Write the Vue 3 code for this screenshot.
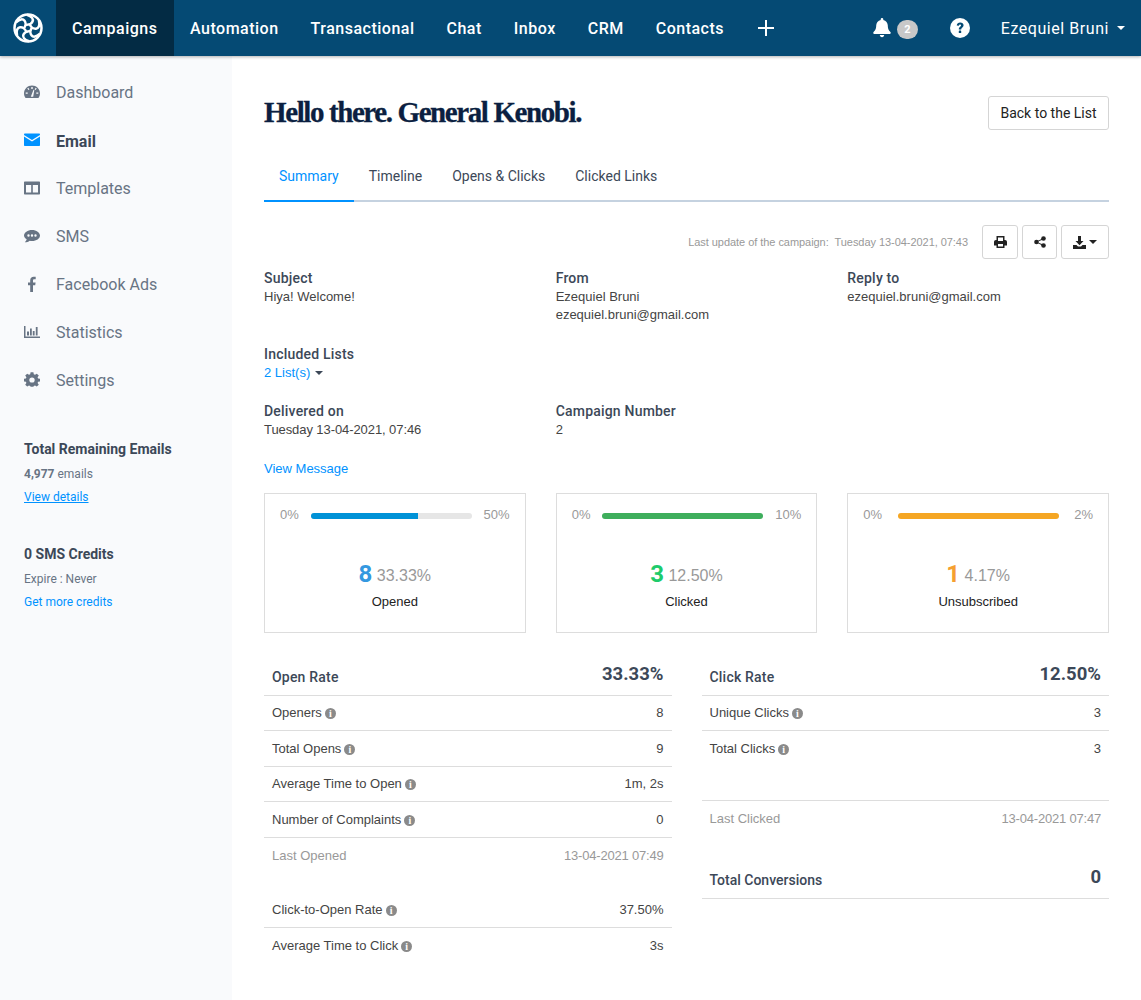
<template>
  <div class="page">
    <header class="topbar">
      <div class="logo">
        <svg width="32" height="32" viewBox="0 0 32 32" fill="none" stroke="#fff" stroke-width="2.500">
          <circle cx="16" cy="16" r="13.500" />
          <path v-for="angle in logoArms" :key="angle" :transform="`rotate(${angle} 16 16)`" d="M13 12.500C20 14 25.500 6 15 2.800" />
        </svg>
      </div>
      <nav class="mainnav">
        <a v-for="item in navItems" :key="item" class="navlink" :class="{ active: item === 'Campaigns' }">{{ item }}</a>
        <a class="navlink plus">
          <svg width="16" height="16" viewBox="0 0 16 16" fill="none" stroke="#fff" stroke-width="2"><path d="M8 0V16M0 8H16" /></svg>
        </a>
      </nav>
      <div class="topright">
        <svg class="bell" width="18" height="20" viewBox="0 0 18 20" fill="#fff">
          <path d="M9 0C8.200 0 7.700.6 7.700 1.300V2C5 2.600 3.200 4.900 3.200 7.600C3.200 11.600 1.800 12.900.6 14.100C.1 14.600 0 15.900 1 15.900H17C18 15.900 17.900 14.600 17.400 14.100C16.200 12.900 14.800 11.600 14.800 7.600C14.800 4.900 13 2.600 10.300 2V1.300C10.300.6 9.800 0 9 0Z" />
          <path d="M6.800 17H11.200C11.200 18.200 10.200 19.200 9 19.200C7.800 19.200 6.800 18.200 6.800 17Z" />
        </svg>
        <span class="bubble">2</span>
        <svg class="help" width="20" height="20" viewBox="0 0 20 20">
          <circle cx="10" cy="10" r="10" fill="#fff" />
          <path d="M6.700 7.400C6.900 5.500 8.300 4.400 10.200 4.400C12.100 4.400 13.600 5.600 13.600 7.300C13.600 9.600 11.200 9.700 11.200 11.400H8.800C8.800 8.600 11 8.700 11 7.400C11 6.900 10.600 6.500 10 6.500C9.400 6.500 9 6.900 8.900 7.700Z" fill="#054a74" />
          <rect x="8.800" y="12.500" width="2.400" height="2.600" rx=".4" fill="#054a74" />
        </svg>
        <span class="username">Ezequiel Bruni</span>
        <span class="caret user-caret"></span>
      </div>
    </header>

    <div class="body">
      <aside class="sidebar">
        <a v-for="link in sideLinks" :key="link.label" class="sidelink" :class="{ current: link.current }">
          <svg class="sideicon" width="16" height="16" viewBox="0 0 16 16" :fill="link.current ? '#0092ff' : '#687484'" v-html="link.icon"></svg>
          <span>{{ link.label }}</span>
        </a>
        <div class="quota first-quota">
          <strong>Total Remaining Emails</strong>
          <p><b>4,977</b> emails</p>
          <a class="underlined">View details</a>
        </div>
        <div class="quota">
          <strong>0 SMS Credits</strong>
          <p>Expire : Never</p>
          <a>Get more credits</a>
        </div>
      </aside>

      <main class="content">
        <div class="titlerow">
          <h1>Hello there. General Kenobi.</h1>
          <button class="btn back">Back to the List</button>
        </div>

        <div class="tabs">
          <a v-for="tab in tabs" :key="tab" class="tab" :class="{ active: tab === 'Summary' }">{{ tab }}</a>
        </div>

        <div class="updaterow">
          <span class="updated">Last update of the campaign:&nbsp; Tuesday 13-04-2021, 07:43</span>
          <button class="btn icon-btn print">
            <svg width="13" height="12" viewBox="0 0 13 12" fill="#222">
              <path fill-rule="evenodd" d="M2.500 0H10.500V4H11C12.200 4 13 4.800 13 6V9.500H10.500V12H2.500V9.500H0V6C0 4.800 .8 4 2 4H2.500ZM4 1.400V5H9V1.400ZM4 8V10.600H9V8Z" />
            </svg>
          </button>
          <button class="btn icon-btn share">
            <svg width="12" height="12" viewBox="0 0 12 12" fill="#222">
              <circle cx="2.500" cy="6" r="2.300" /><circle cx="9.500" cy="2.500" r="2.300" /><circle cx="9.500" cy="9.500" r="2.300" />
              <path d="M2.500 5.400L9.500 2V3.200L3 6L9.500 8.800V10L2.500 6.600Z" />
            </svg>
          </button>
          <button class="btn icon-btn download">
            <svg width="13" height="13" viewBox="0 0 13 13" fill="#222">
              <path d="M5 0H8V5H10.500L6.500 9.200L2.500 5H5ZM0 9H3.500L5 10.500H8L9.500 9H13V13H0Z" />
            </svg>
            <span class="caret dark"></span>
          </button>
        </div>

        <div class="facts">
          <div class="fact">
            <h4>Subject</h4>
            <p>Hiya! Welcome!</p>
          </div>
          <div class="fact">
            <h4>From</h4>
            <p>Ezequiel Bruni</p>
            <p>ezequiel.bruni@gmail.com</p>
          </div>
          <div class="fact">
            <h4>Reply to</h4>
            <p>ezequiel.bruni@gmail.com</p>
          </div>
          <div class="fact lists">
            <h4>Included Lists</h4>
            <p><a>2 List(s)</a> <span class="caret dark small"></span></p>
          </div>
          <div class="fact">
            <h4>Delivered on</h4>
            <p class="date">Tuesday 13-04-2021, 07:46</p>
          </div>
          <div class="fact">
            <h4>Campaign Number</h4>
            <p>2</p>
          </div>
        </div>

        <a class="viewmsg">View Message</a>

        <div class="cards">
          <div v-for="card in cards" :key="card.label" class="card">
            <div class="gauge">
              <span>0%</span>
              <div class="track"><div class="fill" :style="{ width: card.bar + '%', background: card.barColor }"></div></div>
              <span>{{ card.max }}</span>
            </div>
            <div class="count"><b :style="{ color: card.color }">{{ card.value }}</b> {{ card.percent }}</div>
            <div class="cardlabel">{{ card.label }}</div>
          </div>
        </div>

        <div class="tables">
          <div class="column">
            <div class="row head"><span>Open Rate</span><b>33.33%</b></div>
            <div v-for="row in openRows" :key="row.label" class="row" :class="{ muted: row.muted, plain: row.muted }">
              <span>{{ row.label }}<i v-if="!row.muted" class="info">i</i></span>
              <span>{{ row.value }}</span>
            </div>
            <div class="spacer"></div>
            <div class="row"><span>Click-to-Open Rate<i class="info">i</i></span><span>37.50%</span></div>
            <div class="row plain"><span>Average Time to Click<i class="info">i</i></span><span>3s</span></div>
          </div>
          <div class="column">
            <div class="row head"><span>Click Rate</span><b>12.50%</b></div>
            <div class="row"><span>Unique Clicks<i class="info">i</i></span><span>3</span></div>
            <div class="row plain gap-below"><span>Total Clicks<i class="info">i</i></span><span>3</span></div>
            <div class="row muted plain topline"><span>Last Clicked</span><span>13-04-2021 07:47</span></div>
            <div class="row head conversions"><span>Total Conversions</span><b>0</b></div>
          </div>
        </div>
      </main>
    </div>
  </div>
</template>

<script setup>
const navItems = ['Campaigns', 'Automation', 'Transactional', 'Chat', 'Inbox', 'CRM', 'Contacts']
const tabs = ['Summary', 'Timeline', 'Opens & Clicks', 'Clicked Links']
const logoArms = [0, 60, 120, 180, 240, 300]

const sideLinks = [
  { label: 'Dashboard', icon: '<path fill-rule="evenodd" d="M8 1.500C3.600 1.500 0 5 0 9.300C0 11 .5 12.500 1.400 13.800C1.500 14 1.700 14.100 1.900 14.100H14.100C14.300 14.100 14.500 14 14.600 13.800C15.500 12.500 16 11 16 9.300C16 5 12.400 1.500 8 1.500ZM7.300 3H8.700V5H7.300ZM3.300 4.600L4.300 3.800L5.400 5.400L4.400 6.100ZM12.700 4.600L11.700 3.800L10.600 5.400L11.600 6.100ZM1.700 8.500H3.700V9.800H1.700ZM12.300 8.500H14.300V9.800H12.300ZM6.800 12.700L9.500 5.800L10.300 6.100L9.200 12.700Z" />' },
  { label: 'Email', current: true, icon: '<path d="M0 2.500C0 2 .4 1.500 1 1.500H15C15.600 1.500 16 2 16 2.500V3L8 8L0 3ZM0 4.500L8 9.500L16 4.500V13C16 13.600 15.600 14 15 14H1C.4 14 0 13.600 0 13Z" />' },
  { label: 'Templates', icon: '<path fill-rule="evenodd" d="M1 1.500H15C15.600 1.500 16 1.900 16 2.500V13.500C16 14.100 15.600 14.500 15 14.500H1C.4 14.500 0 14.100 0 13.500V2.500C0 1.900 .4 1.500 1 1.500ZM2 5V12.500H7.200V5ZM8.800 5V12.500H14V5Z" />' },
  { label: 'SMS', icon: '<path fill-rule="evenodd" d="M8 2C12.400 2 16 4.500 16 7.500C16 10.500 12.400 13 8 13C7.200 13 6.400 12.900 5.700 12.700C4.500 13.700 2.800 14.300 .8 14.300C1.800 13.400 2.500 12.400 2.700 11.300C1 10.300 0 9 0 7.500C0 4.500 3.600 2 8 2ZM4.500 6.300A1.200 1.200 0 1 0 4.500 8.700A1.200 1.200 0 1 0 4.500 6.300ZM8 6.300A1.200 1.200 0 1 0 8 8.700A1.200 1.200 0 1 0 8 6.300ZM11.500 6.300A1.200 1.200 0 1 0 11.500 8.700A1.200 1.200 0 1 0 11.500 6.300Z" />' },
  { label: 'Facebook Ads', icon: '<path d="M6.200 16V9.200H4V6.400H6.200V4.400C6.200 2 7.600.7 9.700.7C10.700.7 11.400.8 11.700.8V3.300H10.300C9.200 3.300 9 3.900 9 4.700V6.400H11.600L11.200 9.200H9V16Z" />' },
  { label: 'Statistics', icon: '<path d="M0 2H1.500V12.500H16V14H0ZM3 7.500H5V11.500H3ZM6 4.500H7.800V11.500H6ZM8.800 7H10.600V11.500H8.800ZM11.800 3H13.600V11.500H11.800Z" />' },
  { label: 'Settings', icon: '<path fill-rule="evenodd" d="M6.600.8H9.400L9.800 2.900L11 3.400L12.800 2.200L14.800 4.200L13.600 6L14.100 7.200L16 7.600V10.400L14.100 10.800L13.600 12L14.800 13.800L12.800 15.800L11 14.600L9.800 15.100L9.400 16H6.600L6.200 15.100L5 14.600L3.200 15.800L1.200 13.800L2.400 12L1.900 10.800L0 10.400V7.600L1.900 7.200L2.400 6L1.200 4.200L3.200 2.200L5 3.400L6.200 2.900ZM8 6.100A2.700 2.700 0 1 0 8 11.500A2.700 2.700 0 1 0 8 6.100Z" transform="translate(0 -.4) scale(1 .95)" />' }
]

const cards = [
  { value: 8, percent: '33.33%', label: 'Opened', max: '50%', bar: 66.5, barColor: '#0092d7', color: '#3498e0' },
  { value: 3, percent: '12.50%', label: 'Clicked', max: '10%', bar: 100, barColor: '#3eae5c', color: '#1ecb6b' },
  { value: 1, percent: '4.17%', label: 'Unsubscribed', max: '2%', bar: 100, barColor: '#f5a623', color: '#f5a030' }
]

const openRows = [
  { label: 'Openers', value: '8' },
  { label: 'Total Opens', value: '9' },
  { label: 'Average Time to Open', value: '1m, 2s' },
  { label: 'Number of Complaints', value: '0' },
  { label: 'Last Opened', value: '13-04-2021 07:49', muted: true }
]
</script>

<style>
html, body {
  margin: 0;
  background: #fff;
}
</style>

<style scoped>
.page {
  width: 1141px;
  height: 1000px;
  overflow: hidden;
  font-family: Roboto, sans-serif;
  font-size: 14px;
  color: #333;
}

.topbar {
  position: relative;
  z-index: 2;
  height: 56px;
  display: flex;
  align-items: center;
  background: #054a74;
  color: #fff;
  box-shadow: 0 1px 3px rgba(0, 0, 0, 0.3);
}

.logo {
  width: 56px;
  height: 56px;
  display: flex;
  align-items: center;
  justify-content: center;
}

.mainnav {
  display: flex;
  height: 100%;
}

.navlink {
  display: flex;
  align-items: center;
  padding: 0 16px;
  font-size: 16px;
  font-weight: 500;
  letter-spacing: 0.5px;
}

.navlink.active {
  background: #032b44;
  width: 118px;
  box-sizing: border-box;
}

.navlink.plus {
  padding: 0 0 0 18px;
}

.topright {
  margin-left: auto;
  display: flex;
  align-items: center;
  padding-right: 16px;
}

.bubble {
  width: 21px;
  height: 19px;
  margin: 2px 0 0 6px;
  border-radius: 10px;
  background: #c8c8c8;
  color: #fff;
  font-size: 11px;
  font-weight: 700;
  line-height: 19px;
  text-align: center;
}

.help {
  margin-left: 32px;
}

.username {
  margin-left: 31px;
  font-size: 16px;
  letter-spacing: 0.55px;
}

.caret {
  display: inline-block;
  width: 0;
  height: 0;
  border-left: 4px solid transparent;
  border-right: 4px solid transparent;
  border-top: 4px solid #fff;
}

.user-caret {
  margin-left: 8px;
}

.caret.dark {
  border-top-color: #222;
}

.caret.small {
  vertical-align: 2px;
  margin-left: 1px;
  border-top-color: #3c4858;
}

.body {
  display: flex;
  height: 944px;
}

.sidebar {
  width: 232px;
  flex: none;
  box-sizing: border-box;
  padding: 12px 0 0 24px;
  background: #f9fafc;
}

.sidelink {
  height: 48px;
  display: flex;
  align-items: center;
  color: #687484;
  font-size: 16px;
}

.sidelink.current {
  color: #3c4858;
  font-weight: 700;
}

.sidelink.current span {
  padding-top: 2px;
}

.sideicon {
  width: 16px;
  margin-right: 16px;
}

.quota {
  margin-bottom: 39px;
  font-size: 12px;
  color: #687484;
}

.first-quota {
  margin-top: 35px;
}

.quota strong {
  display: block;
  color: #3c4858;
  font-size: 14px;
  font-weight: 700;
  line-height: 20px;
}

.quota p {
  margin: 7px 0;
  line-height: 16px;
}

.quota a {
  display: block;
  color: #0092ff;
  line-height: 16px;
}

.quota a.underlined {
  text-decoration: underline;
}

.content {
  flex: 1;
  min-width: 0;
  padding: 0 32px;
}

.titlerow {
  display: flex;
  align-items: center;
  justify-content: space-between;
  height: 34px;
  margin-top: 40px;
}

h1 {
  margin: 0;
  padding-bottom: 2px;
  color: #0b1f41;
  font-family: "Liberation Serif", serif;
  font-size: 29px;
  font-weight: 700;
  letter-spacing: -1.4px;
  -webkit-text-stroke: 0.3px #0b1f41;
}

.btn {
  box-sizing: border-box;
  height: 34px;
  border: 1px solid #d5d5d5;
  border-radius: 3px;
  background: #fff;
  color: #222;
  font-family: Roboto, sans-serif;
  font-size: 14px;
  padding: 0 11px;
}

.back {
  width: 121px;
  padding: 0;
}

.tabs {
  display: flex;
  margin-top: 20px;
  height: 52px;
  box-sizing: border-box;
  border-bottom: 2px solid #c5d2e0;
}

.tab {
  padding: 0 15px;
  line-height: 52px;
  height: 50px;
  color: #3c4858;
  font-size: 14px;
}

.tab.active {
  color: #0092ff;
  border-bottom: 2px solid #0092ff;
  box-sizing: border-box;
  height: 52px;
}

.updaterow {
  display: flex;
  align-items: center;
  justify-content: flex-end;
  gap: 4px;
  margin-top: 23px;
}

.updated {
  margin-right: 10px;
  color: #999;
  font-family: "Liberation Sans", sans-serif;
  font-size: 11px;
  letter-spacing: -0.05px;
}

.icon-btn {
  display: flex;
  align-items: center;
  justify-content: center;
  padding: 0;
}

.print { width: 36px; }
.share { width: 35px; }
.download { width: 48px; gap: 3px; }

.facts {
  display: grid;
  grid-template-columns: repeat(3, 1fr);
  column-gap: 30px;
  margin-top: 10px;
  line-height: 18px;
  font-family: "Liberation Sans", sans-serif;
  font-size: 13px;
}

.fact h4 {
  margin: 0;
  color: #3c4858;
  font-family: Roboto, sans-serif;
  font-size: 14px;
  font-weight: 500;
  line-height: 19px;
  letter-spacing: 0.2px;
}

.fact p {
  margin: 0;
  color: #444;
}

.fact p.date {
  letter-spacing: -0.08px;
}

.fact.lists {
  grid-column: 1 / 4;
  padding: 21px 0 20px;
}

.fact.lists a {
  color: #0092ff;
}

.viewmsg {
  display: block;
  margin-top: 21px;
  color: #0092ff;
  font-family: "Liberation Sans", sans-serif;
  font-size: 13px;
  line-height: 18px;
}

.cards {
  display: grid;
  grid-template-columns: repeat(3, 1fr);
  column-gap: 30px;
  margin-top: 15px;
}

.card {
  box-sizing: border-box;
  height: 140px;
  border: 1px solid #ddd;
  text-align: center;
}

.gauge {
  display: flex;
  align-items: center;
  justify-content: space-between;
  padding: 13px 15px 0;
  color: #999;
  font-family: "Liberation Sans", sans-serif;
  font-size: 13px;
  line-height: 15px;
}

.track {
  flex: none;
  width: 161px;
  height: 6px;
  margin-top: 2px;
  border-radius: 3px;
  overflow: hidden;
  background: #e6e6e6;
}

.fill {
  height: 100%;
}

.count {
  margin-top: 38px;
  color: #999;
  font-family: "Liberation Sans", sans-serif;
  font-size: 16px;
  line-height: 28px;
}

.count b {
  font-family: Roboto, sans-serif;
  font-size: 24px;
  vertical-align: -1px;
}

.cardlabel {
  margin-top: 3px;
  color: #222;
  font-family: "Liberation Sans", sans-serif;
  font-size: 13px;
  line-height: 18px;
}

.tables {
  display: grid;
  grid-template-columns: 1fr 1fr;
  column-gap: 30px;
  margin-top: 27px;
}

.row {
  box-sizing: border-box;
  height: 35.5px;
  display: flex;
  align-items: center;
  justify-content: space-between;
  padding: 0 8px;
  border-bottom: 1px solid #ddd;
  color: #444;
  font-family: "Liberation Sans", sans-serif;
  font-size: 13px;
}

.row.plain {
  border-bottom: 0;
}

.row.muted {
  color: #999;
}

.row.muted span:last-child {
  letter-spacing: -0.2px;
}

.row.head {
  height: 35.5px;
  color: #3c4858;
  font-family: Roboto, sans-serif;
  font-size: 14px;
  font-weight: 500;
  letter-spacing: 0.2px;
}

.row.head b {
  font-size: 18.5px;
  font-weight: 700;
  letter-spacing: 0;
  position: relative;
  top: -3px;
}

.info {
  display: inline-block;
  width: 11px;
  height: 11px;
  margin-left: 3px;
  border-radius: 50%;
  background: #8a8a8a;
  color: #fff;
  font-family: "Liberation Serif", serif;
  font-size: 10px;
  font-style: normal;
  font-weight: 700;
  line-height: 11px;
  text-align: center;
  vertical-align: 0;
}

.spacer {
  height: 19.5px;
}

.gap-below {
  margin-bottom: 33.5px;
}

.topline {
  border-top: 1px solid #ddd;
}

.row.conversions {
  height: 36.5px;
  margin-top: 27px;
  border-bottom: 1px solid #ddd;
  letter-spacing: 0;
}
</style>
